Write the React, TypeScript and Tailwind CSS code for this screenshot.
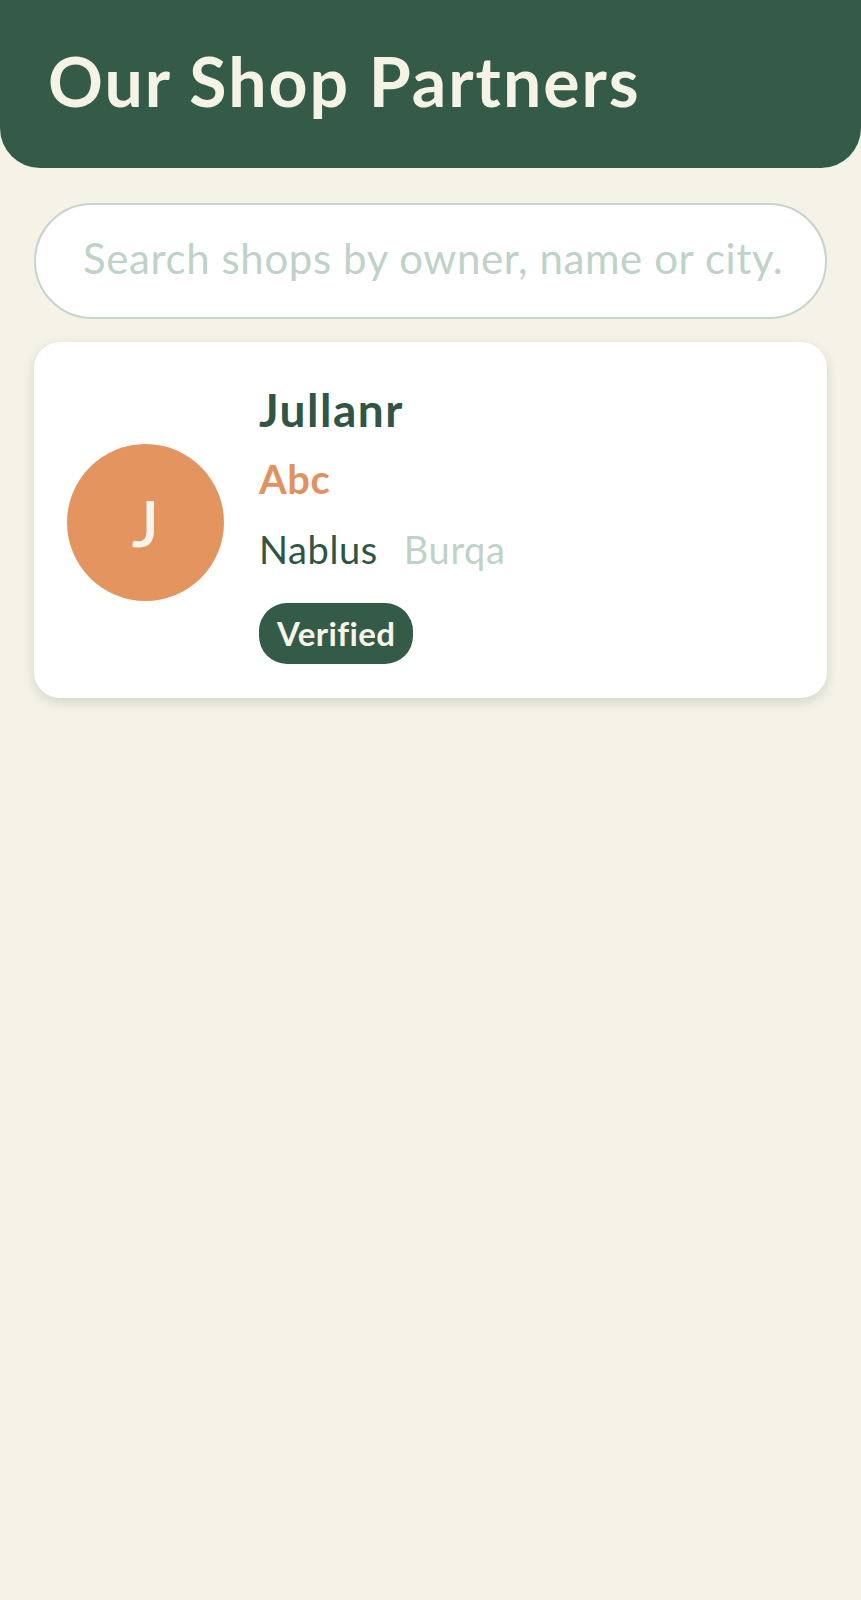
const font = { fontFamily: "Lato, 'Noto Sans', sans-serif" };

const shops = [
  { owner: "Jullanr", name: "Abc", city: "Nablus", area: "Burqa", verified: true },
];

export default function App() {
  return (
    <div className="min-h-[1600px] bg-[#f5f3e8]" style={font}>
      <header className="h-[168px] rounded-b-[40px] bg-[#345a48] pl-[48px] pt-[47px]">
        <h1 className="text-[68px] font-bold leading-none tracking-[2px] text-[#f5f3e6]">Our Shop Partners</h1>
      </header>

      <div className="px-[34px] pt-[35px]">
        <input
          type="text"
          placeholder="Search shops by owner, name or city."
          className="h-[116px] w-full rounded-full border-2 border-[#c5d5cb] bg-white pb-[6px] pl-[47px] pr-4 text-[42px] tracking-[0.6px] text-[#345a48] outline-none placeholder:text-[#bfd2c8]"
        />

        <div className="mt-[23px] flex flex-col gap-6">
          {shops.map((shop) => (
            <div
              key={shop.owner}
              className="flex items-center gap-[35px] rounded-[26px] bg-white pb-[34px] pl-[33px] pt-[40px] shadow-[0_4px_12px_rgba(60,70,50,0.18)]"
            >
              <div className="flex h-[157px] w-[157px] shrink-0 items-center justify-center rounded-full bg-[#e4955f] text-[64px] font-semibold text-[#f8f4ea]">
                {shop.owner[0]}
              </div>
              <div className="flex flex-col items-start">
                <div className="text-[46px] font-bold leading-[1.2] tracking-[1.5px] text-[#2f5545]">{shop.owner}</div>
                <div className="mt-[18px] text-[40px] font-bold leading-[1.2] tracking-[0.5px] text-[#e0935f]">{shop.name}</div>
                <div className="mt-[24px] flex gap-[26px] text-[38px] leading-[1.2] tracking-[0.6px]">
                  <span className="text-[#2f5545]">{shop.city}</span>
                  <span className="text-[#bfd2c8]">{shop.area}</span>
                </div>
                <div className="mt-[30px] flex h-[61px] items-center rounded-[28px] bg-[#345a48] px-[18px] text-[33px] font-bold tracking-[0.4px] text-[#f8f4ea]">
                  Verified
                </div>
              </div>
            </div>
          ))}
        </div>
      </div>
    </div>
  );
}
